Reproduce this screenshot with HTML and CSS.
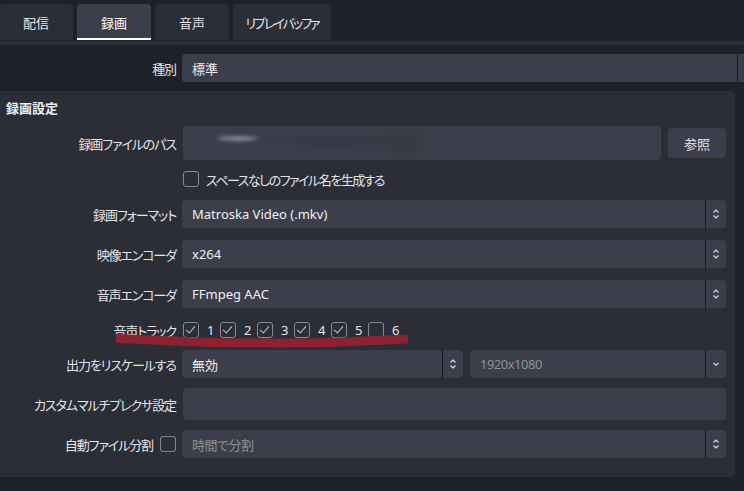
FILE: index.html
```html
<!DOCTYPE html>
<html lang="ja">
<head>
	<meta charset="UTF-8">
	<title>出力設定 - 録画</title>
	<link rel="stylesheet" href="styles.css">
</head>
<body>
<div class="tabs">
	<div class="tab">配信</div>
	<div class="tab active">録画</div>
	<div class="tab">音声</div>
	<div class="tab wide">リプレイバッファ</div>
</div>
<div class="band"></div>

<div class="row type-row">
	<div class="lbl">種別</div>
	<div class="select cut">
		<div class="val">標準</div>
		<div class="arrow"></div>
	</div>
</div>

<div class="group">
	<div class="gtitle">録画設定</div>

	<div class="row path-row">
		<div class="lbl">録画ファイルのパス</div>
		<div class="input path">
			<span class="blur streak"></span>
			<span class="blur smear"></span>
			<span class="blur blob"></span>
		</div>
		<div class="btn">参照</div>
	</div>

	<div class="row check-row">
		<div class="lbl"></div>
		<span class="chk"></span>
		<span class="chk-text">スペースなしのファイル名を生成する</span>
	</div>

	<div class="row sel-row first">
		<div class="lbl">録画フォーマット</div>
		<div class="select">
			<div class="val">Matroska Video (.mkv)</div>
			<div class="arrow"><svg width="8" height="12" viewBox="0 0 8 12"><path d="M1.5 4.5 L4 2 L6.5 4.5 M1.5 7.5 L4 10 L6.5 7.5" fill="none" stroke="#dcdde2" stroke-width="1.2"/></svg></div>
		</div>
	</div>

	<div class="row sel-row">
		<div class="lbl">映像エンコーダ</div>
		<div class="select">
			<div class="val">x264</div>
			<div class="arrow"><svg width="8" height="12" viewBox="0 0 8 12"><path d="M1.5 4.5 L4 2 L6.5 4.5 M1.5 7.5 L4 10 L6.5 7.5" fill="none" stroke="#dcdde2" stroke-width="1.2"/></svg></div>
		</div>
	</div>

	<div class="row sel-row">
		<div class="lbl">音声エンコーダ</div>
		<div class="select">
			<div class="val">FFmpeg AAC</div>
			<div class="arrow"><svg width="8" height="12" viewBox="0 0 8 12"><path d="M1.5 4.5 L4 2 L6.5 4.5 M1.5 7.5 L4 10 L6.5 7.5" fill="none" stroke="#dcdde2" stroke-width="1.2"/></svg></div>
		</div>
	</div>

	<div class="row track-row">
		<div class="lbl">音声トラック</div>
		<div class="tracks">
			<span class="track"><span class="chk on"></span><span class="num">1</span></span>
			<span class="track"><span class="chk on"></span><span class="num">2</span></span>
			<span class="track"><span class="chk on"></span><span class="num">3</span></span>
			<span class="track"><span class="chk on"></span><span class="num">4</span></span>
			<span class="track"><span class="chk on"></span><span class="num">5</span></span>
			<span class="track"><span class="chk"></span><span class="num">6</span></span>
		</div>
	</div>

	<div class="row sel-row">
		<div class="lbl">出力をリスケールする</div>
		<div class="select half">
			<div class="val">無効</div>
			<div class="arrow"><svg width="8" height="12" viewBox="0 0 8 12"><path d="M1.5 4.5 L4 2 L6.5 4.5 M1.5 7.5 L4 10 L6.5 7.5" fill="none" stroke="#dcdde2" stroke-width="1.2"/></svg></div>
		</div>
		<div class="select rest">
			<div class="val dim">1920x1080</div>
			<div class="arrow"><svg width="8" height="6" viewBox="0 0 8 6"><path d="M1.5 1.8 L4 4.3 L6.5 1.8" fill="none" stroke="#dcdde2" stroke-width="1.2"/></svg></div>
		</div>
	</div>

	<div class="row mux-row">
		<div class="lbl">カスタムマルチプレクサ設定</div>
		<div class="input"></div>
	</div>

	<div class="row split-row">
		<div class="lbl"><span>自動ファイル分割</span><span class="chk"></span></div>
		<div class="select">
			<div class="val dim">時間で分割</div>
			<div class="arrow"><svg width="8" height="12" viewBox="0 0 8 12"><path d="M1.5 4.5 L4 2 L6.5 4.5 M1.5 7.5 L4 10 L6.5 7.5" fill="none" stroke="#dcdde2" stroke-width="1.2"/></svg></div>
		</div>
	</div>

	<!-- 手書きの赤線（注釈） -->
	<svg class="scribble" width="735" height="386" viewBox="0 0 735 386">
		<path d="M116 247.5 C 150 248.5 180 251 215 251.5 C 260 252 300 252.5 340 251 C 370 250 390 248.5 408 248" fill="none" stroke="#8a2232" stroke-width="9"/>
	</svg>
</div>
</body>
</html>
```

FILE: styles.css
```css
*{
	box-sizing: border-box;
}
body{
	margin: 0;
	width: 744px;
	height: 491px;
	overflow: hidden;
	background: #1f212a;
	color: #e4e5ea;
	font-family: "Noto Sans", "Noto Sans CJK JP", sans-serif;
	font-size: 13px;
	font-feature-settings: "palt";
}
.tabs{
	display: flex;
	gap: 4px;
	padding-top: 4px;
	margin-left: -1px;
}
.tab{
	width: 74px;
	height: 36px;
	display: flex;
	align-items: center;
	justify-content: center;
	background: #2b2d37;
	border-radius: 4px 4px 0 0;
	color: #e6e7eb;
}
.tab.wide{
	width: 98px;
	letter-spacing: -2px;
}
.tab.active{
	background: #3c3f4b;
	color: #fff;
	box-shadow: inset 0 -2px 0 #fff;
}
.band{
	height: 4px;
	margin-top: 1px;
	background: #2b2d37;
}
.row{
	display: flex;
	align-items: center;
}
.lbl{
	width: 176px;
	flex-shrink: 0;
	display: flex;
	align-items: center;
	justify-content: flex-end;
	gap: 7px;
	white-space: nowrap;
	letter-spacing: -1.1px;
}
.select{
	flex: 1;
	height: 28px;
	margin-left: 6px;
	display: flex;
	background: #3c3f4b;
	border-radius: 4px;
	overflow: hidden;
}
.select .val{
	flex: 1;
	display: flex;
	align-items: center;
	padding-left: 10px;
	color: #eeeff2;
}
.select .val.dim{
	color: #8d9098;
	letter-spacing: -0.5px;
}
.select .arrow{
	width: 21px;
	border-left: 1px solid #1a1b22;
	display: flex;
	align-items: center;
	justify-content: center;
}
.type-row{
	margin-top: 9px;
}
.select.cut{
	flex: none;
	width: 576px;
}
.input{
	flex: 1;
	margin-left: 7px;
	background: #3c3f4b;
	border-radius: 4px;
}
.group{
	position: relative;
	margin-top: 9px;
	width: 735px;
	height: 386px;
	padding: 8px 9px 0 0;
	background: #2b2d37;
	border-radius: 0 4px 4px 0;
}
.gtitle{
	padding-left: 6px;
	height: 18px;
	line-height: 18px;
	font-weight: bold;
	color: #eceef2;
}
.path-row{
	margin-top: 9px;
}
.input.path{
	position: relative;
	height: 34px;
	overflow: hidden;
}
.blur{
	position: absolute;
	border-radius: 50%;
	filter: blur(2px);
}
.streak{
	left: 34px;
	top: 11px;
	width: 42px;
	height: 3px;
	background: #b9bcc6;
}
.smear{
	left: 70px;
	top: 12px;
	width: 160px;
	height: 6px;
	background: #353743;
	filter: blur(3px);
}
.blob{
	left: 200px;
	top: 4px;
	width: 40px;
	height: 26px;
	background: #383a45;
	filter: blur(5px);
}
.btn{
	width: 58px;
	height: 30px;
	margin-left: 7px;
	display: flex;
	align-items: center;
	justify-content: center;
	background: #3c3f4b;
	border-radius: 4px;
}
.chk{
	display: inline-block;
	position: relative;
	width: 16px;
	height: 16px;
	flex-shrink: 0;
	border: 1.5px solid #868992;
	border-radius: 3px;
}
.chk.on::after{
	content: "";
	position: absolute;
	left: 4px;
	top: 1px;
	width: 4px;
	height: 8px;
	border-right: 1.5px solid #c6c8ce;
	border-bottom: 1.5px solid #c6c8ce;
	transform: rotate(40deg);
}
.check-row{
	margin-top: 11px;
	height: 16px;
}
.check-row .chk{
	margin-left: 7px;
}
.chk-text{
	margin-left: 7px;
	letter-spacing: -1.5px;
}
.sel-row{
	margin-top: 12px;
}
.sel-row.first{
	margin-top: 13px;
}
.track-row{
	margin-top: 14px;
	height: 16px;
}
.tracks{
	display: flex;
	margin-left: 7px;
}
.track{
	width: 37px;
	display: flex;
	align-items: center;
}
.num{
	margin-left: 8px;
}
.select.half{
	flex: none;
	width: 281px;
}
.select.rest{
	margin-left: 7px;
}
.mux-row{
	margin-top: 10px;
}
.mux-row .input{
	height: 32px;
}
.split-row{
	margin-top: 10px;
}
.scribble{
	position: absolute;
	left: 0;
	top: 0;
	pointer-events: none;
}
```
